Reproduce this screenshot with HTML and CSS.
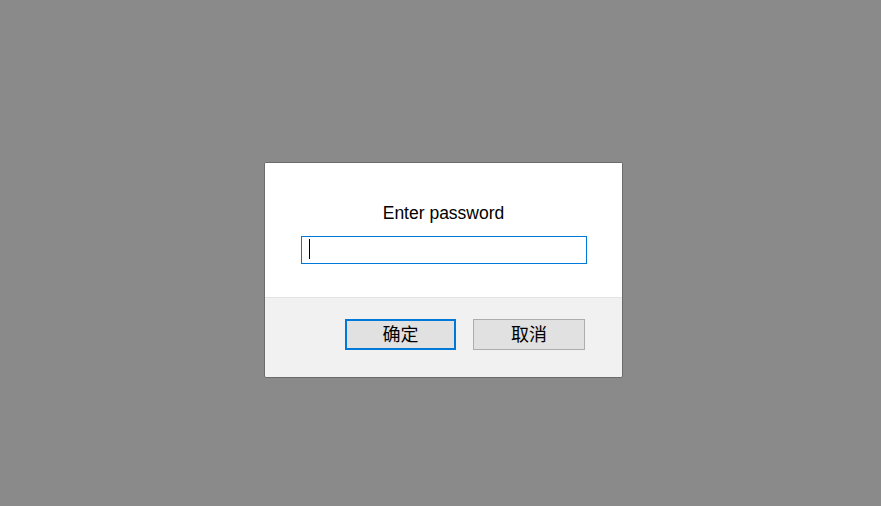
FILE: index.html
```html
<!DOCTYPE html>
<html lang="en">
<head>
<meta charset="utf-8">
<title>Enter password</title>
<link rel="stylesheet" href="styles.css">
</head>
<body>
<div class="overlay">
  <div class="dialog" role="dialog" aria-label="Enter password">
    <div class="dialog-body">
      <div class="title">Enter password</div>
      <div class="field">
        <input class="password" type="password" aria-label="Password">
        <span class="caret"></span>
      </div>
    </div>
    <div class="dialog-footer">
      <button class="btn btn-primary" type="button">确定</button>
      <button class="btn" type="button">取消</button>
    </div>
  </div>
</div>
</body>
</html>
```

FILE: styles.css
```css
html, body {
  margin: 0;
  padding: 0;
  height: 100%;
}
body {
  background: #8a8a8a;
  font-family: "Liberation Sans", Arial, "Noto Sans CJK SC", sans-serif;
}
.overlay {
  padding: 162px 0 0 264px;
}
.dialog {
  width: 357px;
  border: 1px solid #6b6b6b;
  border-radius: 2px;
  background: #f1f1f1;
  overflow: hidden;
}
.dialog-body {
  background: #ffffff;
  height: 135px;
  box-sizing: border-box;
  padding-top: 40px;
  border-bottom: 1px solid #e3e3e3;
  display: flex;
  flex-direction: column;
  align-items: center;
}
.title {
  font-size: 17.5px;
  line-height: 20px;
  color: #000;
}
.field {
  position: relative;
  margin-top: 13px;
  width: 286px;
  height: 28px;
}
.password {
  display: block;
  width: 100%;
  height: 100%;
  box-sizing: border-box;
  margin: 0;
  padding: 0 8px;
  border: 1px solid #0078d7;
  background: #fff;
  outline: none;
  font-size: 16px;
}
.caret {
  position: absolute;
  left: 8px;
  top: 3px;
  width: 1px;
  height: 20px;
  background: #000;
}
.dialog-footer {
  height: 79px;
  box-sizing: border-box;
  padding: 21px 37px 0 0;
  display: flex;
  justify-content: flex-end;
  align-items: flex-start;
  gap: 17px;
}
.btn {
  width: 112px;
  height: 31px;
  box-sizing: border-box;
  margin: 0;
  padding: 0 0 2px;
  background: #e1e1e1;
  border: 1px solid #adadad;
  border-radius: 0;
  font-family: "Noto Sans CJK SC", sans-serif;
  font-size: 18px;
  line-height: 25px;
  color: #000;
}
.btn-primary {
  width: 111px;
  border: 2px solid #0078d7;
  line-height: 23px;
}
```
